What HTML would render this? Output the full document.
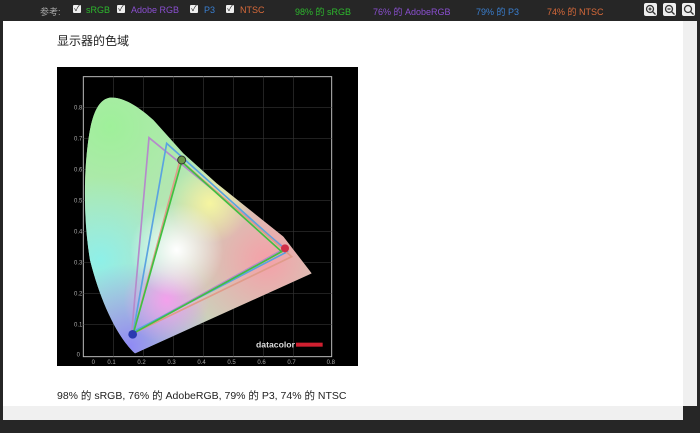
<!DOCTYPE html><html><head><meta charset="utf-8"><style>
body{margin:0;width:700px;height:433px;background:#262626;position:relative;overflow:hidden;font-family:"Liberation Sans","Noto Sans CJK SC",sans-serif}
.t{position:absolute;font-size:9px;top:5px;white-space:nowrap}
.cb{position:absolute;top:5px;width:8px;height:8px;background:#eee;border-radius:1px;font-size:8px;line-height:8px;text-align:center;color:#222}
.ic{position:absolute;top:3px;width:13px;height:13px;background:#eee;border-radius:2px}
</style></head><body>
<div class="t" style="left:40px;color:#aaa">参考:</div>
<div class="cb" style="left:73px">✓</div><div class="t" style="left:86px;color:#2db82d">sRGB</div>
<div class="cb" style="left:117px">✓</div><div class="t" style="left:131px;color:#8a4fd0">Adobe RGB</div>
<div class="cb" style="left:190px">✓</div><div class="t" style="left:204px;color:#3a7fd0">P3</div>
<div class="cb" style="left:226px">✓</div><div class="t" style="left:240px;color:#d86a3a">NTSC</div>
<div class="t" style="left:295px;color:#2db82d">98% 的 sRGB</div>
<div class="t" style="left:373px;color:#8a4fd0">76% 的 AdobeRGB</div>
<div class="t" style="left:476px;color:#3a7fd0">79% 的 P3</div>
<div class="t" style="left:547px;color:#d86a3a">74% 的 NTSC</div>
<svg style="position:absolute;left:644px;top:3px" width="52" height="14" viewBox="0 0 52 14">
<rect x="0" y="0" width="13" height="13" rx="2" fill="#eee"/><rect x="19" y="0" width="13" height="13" rx="2" fill="#eee"/><rect x="38" y="0" width="13" height="13" rx="2" fill="#eee"/>
<g fill="none" stroke="#333" stroke-width="1.3"><circle cx="6" cy="6" r="3.5"/><path d="M8.5,8.5 L11.5,11.5M4.5,6H7.5M6,4.5V7.5"/>
<circle cx="25" cy="6" r="3.5"/><path d="M27.5,8.5 L30.5,11.5M23.5,6H26.5"/>
<circle cx="44" cy="6" r="3.5"/><path d="M46.5,8.5 L49.5,11.5"/></g></svg>
<div style="position:absolute;left:3px;top:21px;width:680px;height:385px;background:#fff"></div>
<div style="position:absolute;left:683px;top:21px;width:14px;height:385px;background:#f0f0f0"></div>
<div style="position:absolute;left:3px;top:406px;width:680px;height:14px;background:#f0f0f0"></div>
<div style="position:absolute;left:57px;top:32px;font-size:12px;color:#222">显示器的色域</div>
<div style="position:absolute;left:57px;top:388px;font-size:10.5px;color:#222">98% 的 sRGB, 76% 的 AdobeRGB, 79% 的 P3, 74% 的 NTSC</div>
<div style="position:absolute;left:57px;top:67px;width:301px;height:299px;background:#000"></div>
<svg style="position:absolute;left:50px;top:60px" width="320" height="320" viewBox="0 0 960 960">
<defs>
<clipPath id="c"><path d="M255,880 C200,830 150,720 120,600 C100,480 100,330 118,220 C130,150 150,118 180,113 C220,110 265,140 310,180 L400,280 L500,370 L600,450 L700,530 L785,640 Z"/></clipPath>
<radialGradient id="g1" cx="180" cy="200" r="420" gradientUnits="userSpaceOnUse"><stop offset="0" stop-color="#9ff09a"/><stop offset="1" stop-color="#9ff09a" stop-opacity="0"/></radialGradient>
<radialGradient id="g2" cx="150" cy="600" r="250" gradientUnits="userSpaceOnUse"><stop offset="0" stop-color="#8ef0e8"/><stop offset="1" stop-color="#8ef0e8" stop-opacity="0"/></radialGradient>
<radialGradient id="g3" cx="240" cy="860" r="250" gradientUnits="userSpaceOnUse"><stop offset="0" stop-color="#8f8af5"/><stop offset="1" stop-color="#8f8af5" stop-opacity="0"/></radialGradient>
<radialGradient id="g4" cx="650" cy="600" r="330" gradientUnits="userSpaceOnUse"><stop offset="0" stop-color="#f5a0a8"/><stop offset="1" stop-color="#f5a0a8" stop-opacity="0"/></radialGradient>
<radialGradient id="g5" cx="380" cy="570" r="140" gradientUnits="userSpaceOnUse"><stop offset="0" stop-color="#fff"/><stop offset="1" stop-color="#fff" stop-opacity="0"/></radialGradient>
<radialGradient id="g6" cx="480" cy="430" r="120" gradientUnits="userSpaceOnUse"><stop offset="0" stop-color="#f6f5a0"/><stop offset="1" stop-color="#f6f5a0" stop-opacity="0"/></radialGradient>
<radialGradient id="g7" cx="350" cy="720" r="130" gradientUnits="userSpaceOnUse"><stop offset="0" stop-color="#f3a0ec"/><stop offset="1" stop-color="#f3a0ec" stop-opacity="0"/></radialGradient>
</defs>
<rect x="100" y="50" width="745" height="840" fill="none" stroke="#bbb" stroke-width="3"/>
<g stroke="#333" stroke-width="2">
<path d="M190,50V890M280,50V890M370,50V890M460,50V890M550,50V890M640,50V890M730,50V890M100,143H845M100,236H845M100,329H845M100,422H845M100,515H845M100,608H845M100,701H845M100,794H845"/></g>
<g clip-path="url(#c)">
<rect x="0" y="0" width="960" height="960" fill="#bfe0c0"/>
<rect width="960" height="960" fill="url(#g4)"/>
<rect width="960" height="960" fill="url(#g1)"/>
<rect width="960" height="960" fill="url(#g2)"/>
<rect width="960" height="960" fill="url(#g3)"/>
<rect width="960" height="960" fill="url(#g7)"/>
<rect width="960" height="960" fill="url(#g6)"/>
<rect width="960" height="960" fill="url(#g5)"/>
</g>
<g fill="none" stroke-width="5">
<path d="M297,233 L705,565 L245,820Z" stroke="#b58acb"/>
<path d="M350,250 L712,575 L250,815Z" stroke="#5aa3e0"/>
<path d="M390,300 L725,590 L250,820Z" stroke="#e09c8a"/>
<path d="M395,305 L695,575 L250,820Z" stroke="#40c040"/>
</g>
<circle cx="395" cy="300" r="12" fill="#6a9a4a" stroke="#333" stroke-width="3"/>
<circle cx="705" cy="565" r="12" fill="#d0304a"/>
<circle cx="248" cy="823" r="13" fill="#2a3ab0"/>
<g fill="#aaa" font-size="18" font-family="Liberation Sans">
<text x="125" y="912">0</text><text x="172" y="912">0.1</text><text x="262" y="912">0.2</text><text x="352" y="912">0.3</text><text x="442" y="912">0.4</text><text x="532" y="912">0.5</text><text x="622" y="912">0.6</text><text x="712" y="912">0.7</text><text x="830" y="912">0.8</text>
<text x="72" y="148">0.8</text><text x="72" y="241">0.7</text><text x="72" y="334">0.6</text><text x="72" y="427">0.5</text><text x="72" y="520">0.4</text><text x="72" y="613">0.3</text><text x="72" y="706">0.2</text><text x="72" y="799">0.1</text><text x="80" y="890">0</text>
</g>
<text x="618" y="862" fill="#ddd" font-size="26" font-weight="bold" font-family="Liberation Sans">datacolor</text>
<rect x="738" y="848" width="80" height="12" fill="#d02030"/>
</svg>
</body></html>
